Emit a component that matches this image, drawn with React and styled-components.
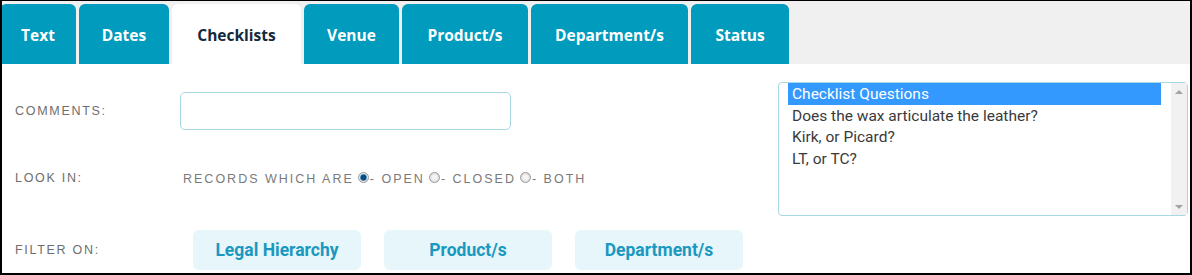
import React from 'react'
import styled, { createGlobalStyle } from 'styled-components'

const Global = createGlobalStyle`
  body {
    margin: 0;
    background: #fff;
  }
`

const Frame = styled.div`
  width: 1192px;
  height: 275px;
  box-sizing: border-box;
  border: 2px solid #000;
  border-top-width: 1px;
  overflow: hidden;
  background: #fff;
`

const TabBar = styled.div`
  display: flex;
  gap: 3px;
  height: 63px;
  box-sizing: border-box;
  padding-top: 3px;
  margin-left: -2px;
  background: #f0f0f0;
`

const Tab = styled.div`
  width: ${p => p.w}px;
  height: 60px;
  display: flex;
  align-items: center;
  justify-content: center;
  border-radius: 6px 6px 0 0;
  background: ${p => (p.active ? '#fff' : '#009bbd')};
  color: ${p => (p.active ? '#13293d' : '#fff')};
  font-family: 'Open Sans', 'Liberation Sans', sans-serif;
  font-weight: 700;
  font-size: 15.5px;
  padding-top: 2px;
  box-sizing: border-box;
`

const Body = styled.div`
  display: flex;
  padding-left: 13px;
`

const Form = styled.div`
  flex: 1;
  display: flex;
  flex-direction: column;
`

const Row = styled.div`
  display: flex;
  align-items: center;
  height: ${p => p.h}px;
  margin-top: ${p => p.top}px;
`

const Label = styled.div`
  width: 165px;
  flex-shrink: 0;
  font-family: 'Liberation Sans', Arial, sans-serif;
  font-size: 12.5px;
  letter-spacing: 1.7px;
  color: #6e6e6e;
`

const TextBox = styled.input`
  width: 331px;
  height: 38px;
  box-sizing: border-box;
  border: 1px solid #a6d8e2;
  border-radius: 5px;
  outline: none;
  padding: 0 8px;
`

const Radios = styled.div`
  display: flex;
  align-items: center;
  margin-left: 3px;
  padding-top: 2px;
  font-family: 'Liberation Sans', Arial, sans-serif;
  font-size: 12.5px;
  letter-spacing: 2px;
  color: #7a7a7a;
  white-space: pre;
`

const Radio = styled.span`
  width: 11px;
  height: 11px;
  box-sizing: border-box;
  border-radius: 50%;
  border: 1px solid #9a9a9a;
  background: ${p =>
    p.checked
      ? 'radial-gradient(circle, #0b4a7a 0 2.5px, #4a8fc0 3px, #e8e8e8 4px)'
      : 'radial-gradient(circle, #f6f6f6 0 2px, #d6d6d6 5px)'};
  margin: 0 1px 4px 4px;
`

const Filters = styled.div`
  display: flex;
  gap: 23px;
  margin-left: 13px;
`

const FilterButton = styled.div`
  width: 168px;
  height: 40px;
  display: flex;
  align-items: center;
  justify-content: center;
  border-radius: 6px;
  background: #e6f6fa;
  color: #1a98c0;
  font-family: 'Liberation Sans Narrow', 'Roboto', sans-serif;
  font-weight: 700;
  font-size: 17.5px;
`

const ListBox = styled.div`
  display: flex;
  width: 410px;
  height: 134px;
  box-sizing: border-box;
  margin: 18px 2px 0 0;
  border: 1px solid #a6d8e2;
  border-radius: 4px;
  background: #fff;
`

const Options = styled.div`
  flex: 1;
  padding: 0 10px 0 9px;
`

const Option = styled.div`
  height: 21.5px;
  line-height: 22px;
  padding-left: 4px;
  font-family: Roboto, 'Open Sans', sans-serif;
  font-size: 15.5px;
  color: ${p => (p.selected ? '#fff' : '#3a3a3a')};
  background: ${p => (p.selected ? '#3399ff' : 'transparent')};
`

const Scrollbar = styled.div`
  width: 16px;
  background: #f1f1f1;
  display: flex;
  flex-direction: column;
  justify-content: space-between;
  align-items: center;
  padding: 7px 0 6px;
`

const Arrow = styled.span`
  width: 0;
  height: 0;
  border-left: 4px solid transparent;
  border-right: 4px solid transparent;
  ${p => (p.down ? 'border-top: 4px solid #a3a3a3;' : 'border-bottom: 4px solid #a3a3a3;')}
`

const tabs = [
  ['Text', 76],
  ['Dates', 90],
  ['Checklists', 129],
  ['Venue', 95],
  ['Product/s', 126],
  ['Department/s', 157],
  ['Status', 98],
]

const questions = [
  'Checklist Questions',
  'Does the wax articulate the leather?',
  'Kirk, or Picard?',
  'LT, or TC?',
]

const App = () => (
  <Frame>
    <Global />
    <TabBar>
      {tabs.map(([name, w]) => (
        <Tab key={name} w={w} active={name === 'Checklists'}>{name}</Tab>
      ))}
    </TabBar>
    <Body>
      <Form>
        <Row h={38} top={28}>
          <Label>COMMENTS:</Label>
          <TextBox type="text" />
        </Row>
        <Row h={36} top={30}>
          <Label>LOOK IN:</Label>
          <Radios>
            RECORDS WHICH ARE<Radio checked />- OPEN<Radio />- CLOSED<Radio />- BOTH
          </Radios>
        </Row>
        <Row h={40} top={34}>
          <Label>FILTER ON:</Label>
          <Filters>
            <FilterButton>Legal Hierarchy</FilterButton>
            <FilterButton>Product/s</FilterButton>
            <FilterButton>Department/s</FilterButton>
          </Filters>
        </Row>
      </Form>
      <ListBox>
        <Options>
          {questions.map((q, i) => (
            <Option key={q} selected={i === 0}>{q}</Option>
          ))}
        </Options>
        <Scrollbar>
          <Arrow />
          <Arrow down />
        </Scrollbar>
      </ListBox>
    </Body>
  </Frame>
)

export default App
